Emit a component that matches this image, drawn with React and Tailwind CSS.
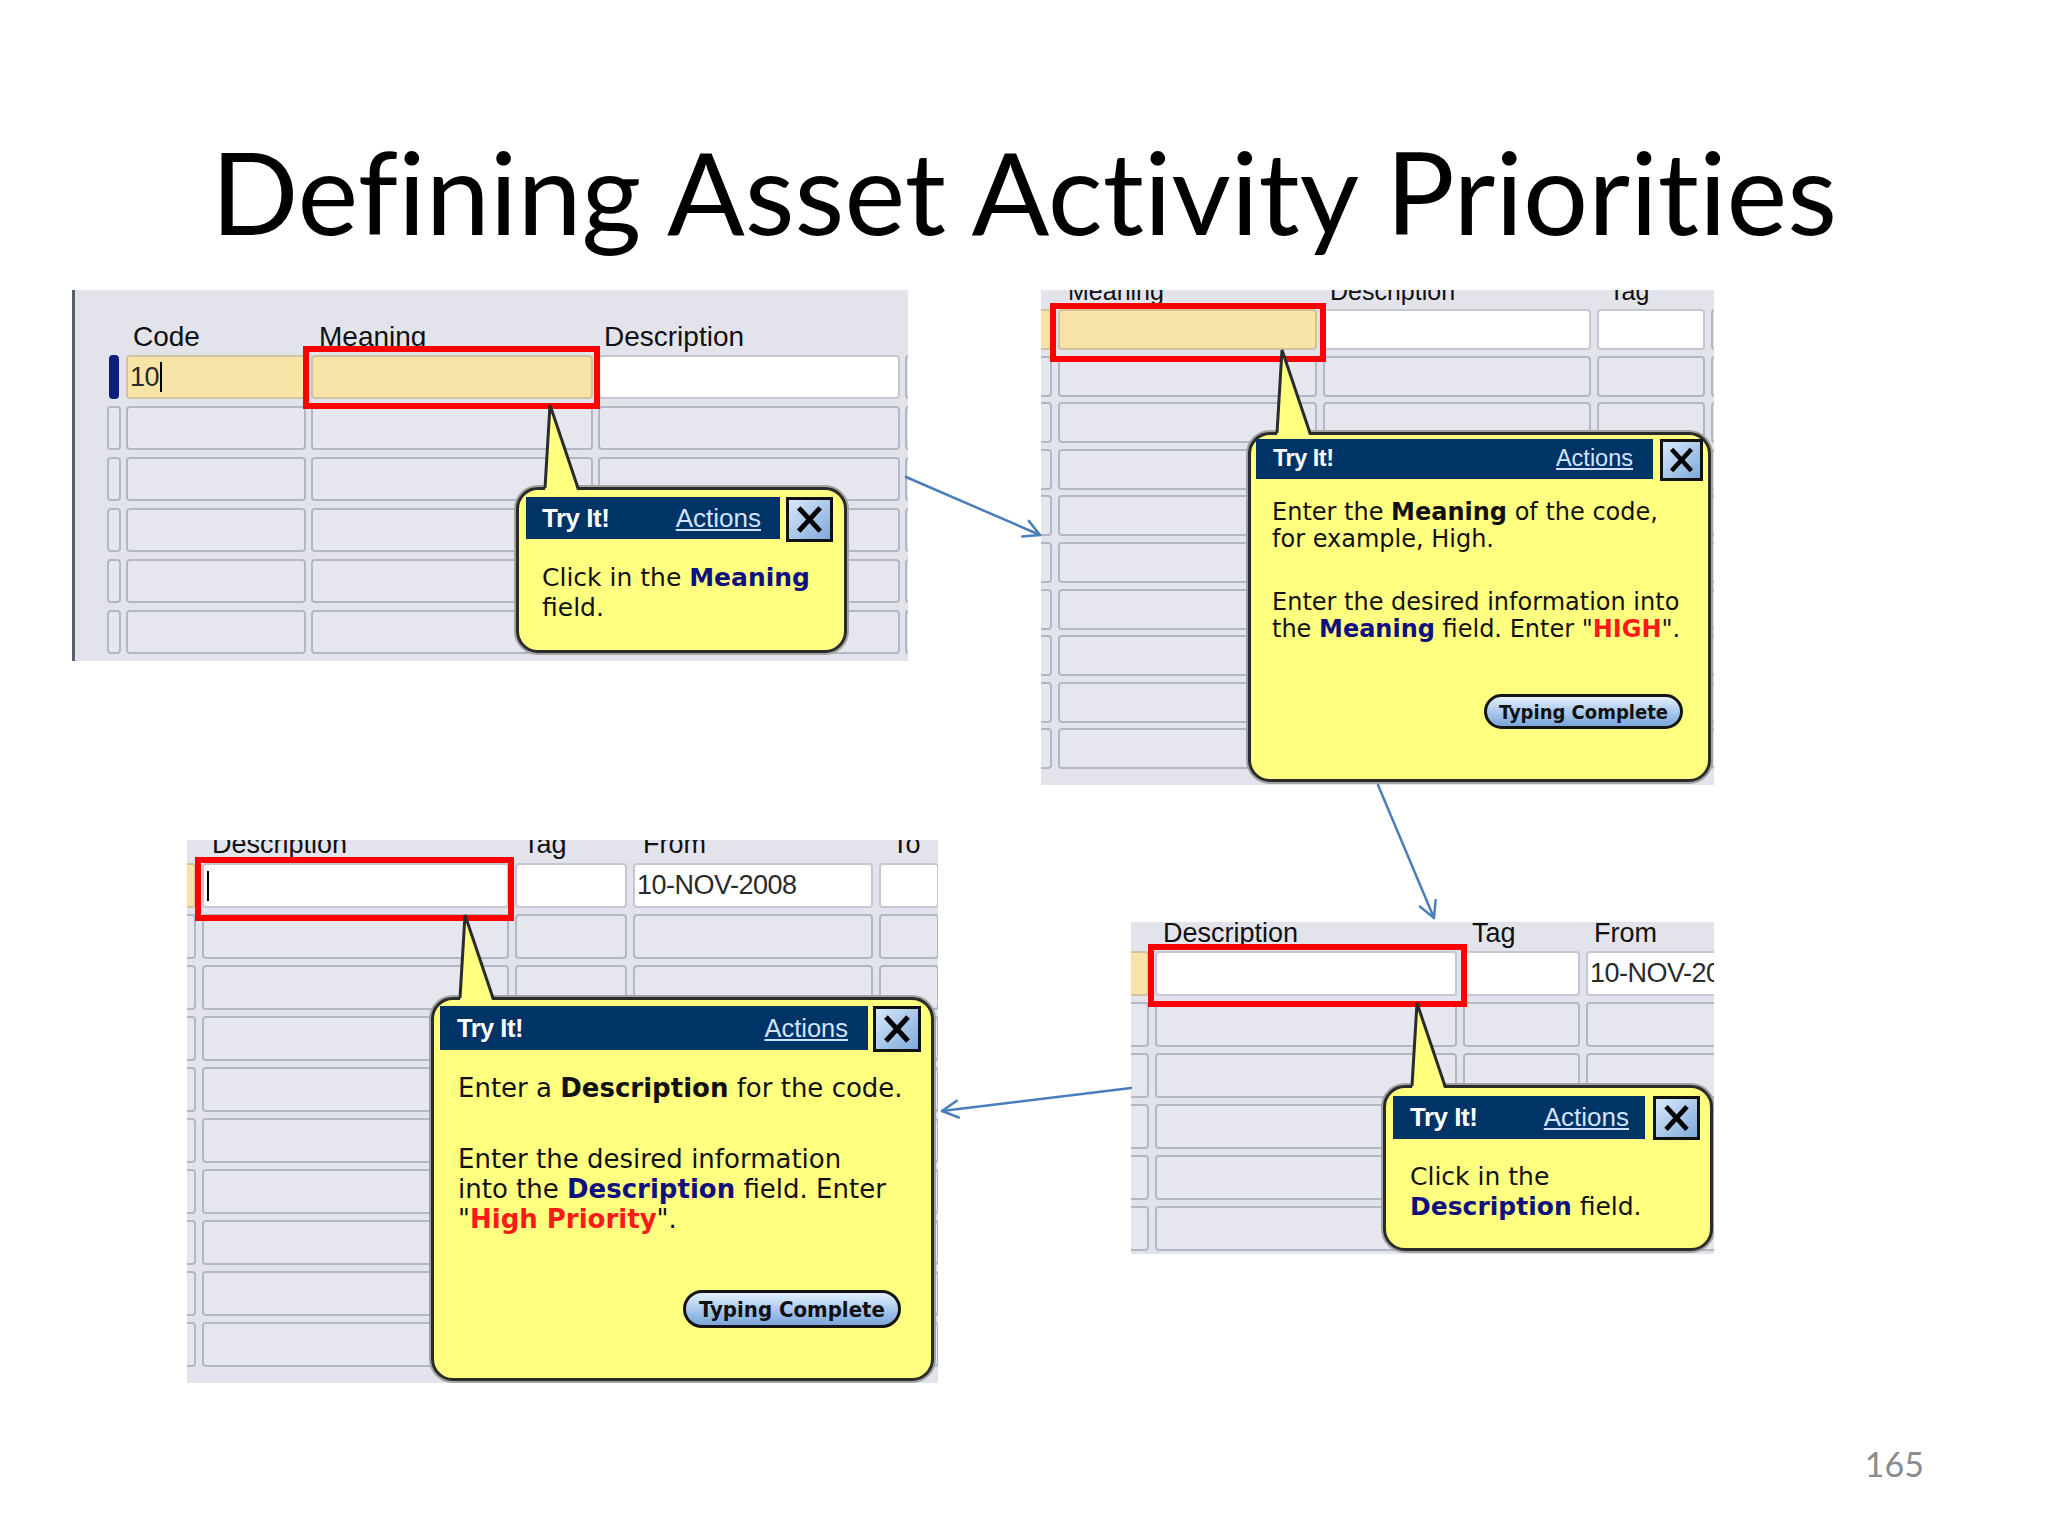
import React from 'react'

const UI = "font-['Liberation_Sans',Arial,sans-serif]"
const TIP = "font-['DejaVu_Sans',Verdana,sans-serif]"
const BTN = "font-['DejaVu_Sans_Condensed','DejaVu_Sans',sans-serif]"

const KIND = {
  cell: 'border-[#b2b7c4] bg-[#e6e7ee]',
  yellow: 'border-[#cfc3a0] bg-[#f9e4a8]',
  white: 'border-[#c4c8d2] bg-white',
}

function Cell({ w, kind, text, cursor }) {
  if (kind === 'navy') {
    return (
      <div className={`${w} shrink-0 h-full`}>
        <div className="ml-[2px] w-[10px] h-full rounded-[4px] bg-[#0c1f7e]" />
      </div>
    )
  }
  return (
    <div className={`${w} ${KIND[kind]} shrink-0 h-full rounded-[4px] border-2 flex items-center overflow-hidden whitespace-nowrap pl-[2px] text-[27px] text-[#2a2a2a]`}>
      {text && <span className="tracking-[-0.5px]">{text}</span>}
      {cursor && <span className="ml-[1px] w-[2px] h-[30px] bg-black" />}
    </div>
  )
}

function Panel({ pos, cols, gap, shift, head, headers, rows, rowH, rowGap, first, red, children }) {
  return (
    <div className={`absolute overflow-hidden bg-[#e3e4eb] ${UI} ${pos}`}>
      <div className={`flex ${gap} ${shift} ${head} text-[#111] whitespace-nowrap`}>
        {cols.map((w, i) => (
          <div key={i} className={`shrink-0 ${w} ${headers[i] ? headers[i].c : ''}`}>
            {headers[i] ? headers[i].t : ''}
          </div>
        ))}
      </div>
      <div className={`flex flex-col ${rowGap} ${shift}`}>
        {Array.from({ length: rows }).map((_, r) => (
          <div key={r} className={`flex ${gap} ${rowH}`}>
            {cols.map((w, i) => {
              const f = r === 0 ? first[i] : { k: 'cell' }
              return <Cell key={i} w={w} kind={f.k} text={f.t} cursor={f.cur} />
            })}
          </div>
        ))}
      </div>
      {/* highlight frame */}
      <div className={`absolute border-[6px] border-[#ff0000] ${red}`} />
      {children}
    </div>
  )
}

function XBox({ cls }) {
  return (
    <div className={`shrink-0 border-[3px] border-[#111] bg-linear-to-br from-[#d9e9fb] to-[#7fa9da] ${cls}`}>
      <svg viewBox="0 0 40 40" className="w-full h-full">
        <line x1="9" y1="8" x2="31" y2="32" stroke="#000" strokeWidth="5" />
        <line x1="31" y1="8" x2="9" y2="32" stroke="#000" strokeWidth="5" />
      </svg>
    </div>
  )
}

function TypingComplete({ cls }) {
  return (
    <div className={`ml-auto flex items-center justify-center rounded-full border-[3px] border-[#141414] bg-linear-to-b from-[#e4effb] via-[#abcaee] to-[#7ba6d8] font-bold text-[#111] ${BTN} ${cls}`}>
      Typing Complete
    </div>
  )
}

function Bubble({ pos, pad, gap, bar, xbox, head, children }) {
  return (
    <div className={`absolute rounded-[22px] border-[3px] border-[#2b2b2b] bg-[#ffff80] shadow-[0_0_0_2px_#a2a2a2] ${pos}`}>
      <svg className="absolute left-0 top-[-93px] w-[80px] h-[96px] overflow-visible" viewBox="0 0 80 96">
        <polygon points="26,96 31,8 59,96" fill="#ffff80" />
        <polyline points="26,91 31,8 59,91" fill="none" stroke="#2b2b2b" strokeWidth="3" />
      </svg>
      <div className={`flex items-start ${pad} ${gap}`}>
        <div className={`flex items-center justify-between bg-[#003366] ${UI} ${bar} ${head}`}>
          <span className="font-bold text-white tracking-[-0.5px]">Try It!</span>
          <span className="text-[#d2e3ff] underline underline-offset-2">Actions</span>
        </div>
        <XBox cls={xbox} />
      </div>
      {children}
    </div>
  )
}

const Navy = ({ children }) => <b className="text-[#10107e]">{children}</b>
const Red = ({ children }) => <b className="text-[#ff1a1a]">{children}</b>

export default function App() {
  return (
    <div className="relative w-[2048px] h-[1536px] overflow-hidden bg-white">
      <h1 className="pt-[133px] text-center text-[115px] leading-none font-['Lato',sans-serif] font-normal text-black [font-variant-ligatures:none]">
        Defining Asset Activity Priorities
      </h1>

      {/* step 1 */}
      <Panel
        pos="left-[72px] top-[290px] w-[836px] h-[371px] border-l-[3px] border-[#566070]"
        cols={['w-[14px]', 'w-[180px]', 'w-[282px]', 'w-[302px]', 'w-[60px]']}
        gap="gap-[5px]"
        shift="pl-[32px]"
        head="h-[65px] pt-[31px] text-[28px] leading-[32px]"
        headers={[null, { t: 'Code', c: 'pl-[7px]' }, { t: 'Meaning', c: 'pl-[8px]' }, { t: 'Description', c: 'pl-[6px]' }, null]}
        rows={6}
        rowH="h-[44px]"
        rowGap="gap-[7px]"
        first={[{ k: 'navy' }, { k: 'yellow', t: '10', cur: true }, { k: 'yellow' }, { k: 'white' }, { k: 'cell' }]}
        red="left-[228px] top-[56px] w-[297px] h-[63px]"
      >
        <Bubble
          pos="left-[441px] top-[197px] w-[331px] h-[166px]"
          pad="pl-[7px] pt-[7px]"
          gap="gap-[6px]"
          bar="w-[254px] h-[42px]"
          xbox="w-[47px] h-[45px]"
          head="pl-[16px] pr-[19px] text-[26px]"
        >
          <p className={`${TIP} mt-[21px] pl-[23px] text-[25px] leading-[30px] text-[#111]`}>
            Click in the <Navy>Meaning</Navy>
            <br />
            field.
          </p>
        </Bubble>
      </Panel>

      {/* step 2 */}
      <Panel
        pos="left-[1041px] top-[290px] w-[673px] h-[495px]"
        cols={['w-[41px]', 'w-[259px]', 'w-[268px]', 'w-[108px]', 'w-[60px]']}
        gap="gap-[6px]"
        shift="-ml-[30px]"
        head="-mt-[13px] h-[32px] text-[25px] leading-[29px]"
        headers={[null, { t: 'Meaning', c: 'pl-[10px]' }, { t: 'Description', c: 'pl-[7px]' }, { t: 'Tag', c: 'pl-[12px]' }, null]}
        rows={10}
        rowH="h-[41px]"
        rowGap="gap-[5.6px]"
        first={[{ k: 'yellow' }, { k: 'yellow' }, { k: 'white' }, { k: 'white' }, { k: 'cell' }]}
        red="left-[9px] top-[13px] w-[276px] h-[59px]"
      >
        <Bubble
          pos="left-[207px] top-[142px] w-[463px] h-[350px]"
          pad="pl-[5px] pt-[4px]"
          gap="gap-[7px]"
          bar="w-[397px] h-[40px]"
          xbox="w-[43px] h-[42px]"
          head="pl-[17px] pr-[20px] text-[23.5px]"
        >
          <div className={`${TIP} mt-[18px] pl-[21px] text-[24px] leading-[27px] text-[#111] whitespace-nowrap`}>
            <p>
              Enter the <b>Meaning</b> of the code,
              <br />
              for example, High.
            </p>
            <p className="mt-[36px]">
              Enter the desired information into
              <br />
              the <Navy>Meaning</Navy> field. Enter "<Red>HIGH</Red>".
            </p>
          </div>
          <div className="flex pr-[25px] mt-[51px]">
            <TypingComplete cls="w-[199px] h-[35px] text-[20px]" />
          </div>
        </Bubble>
      </Panel>

      {/* step 3 */}
      <Panel
        pos="left-[187px] top-[840px] w-[751px] h-[543px]"
        cols={['w-[40px]', 'w-[307px]', 'w-[112px]', 'w-[240px]', 'w-[60px]']}
        gap="gap-[6px]"
        shift="-ml-[31px]"
        head="-mt-[11px] h-[34px] text-[27px] leading-[31px]"
        headers={[null, { t: 'Description', c: 'pl-[10px]' }, { t: 'Tag', c: 'pl-[8px]' }, { t: 'From', c: 'pl-[10px]' }, { t: 'To', c: 'pl-[13px]' }]}
        rows={10}
        rowH="h-[45px]"
        rowGap="gap-[6px]"
        first={[{ k: 'yellow' }, { k: 'white', cur: true }, { k: 'white' }, { k: 'white', t: '10-NOV-2008' }, { k: 'white' }]}
        red="left-[8px] top-[17px] w-[319px] h-[64px]"
      >
        <Bubble
          pos="left-[244px] top-[157px] w-[503px] h-[384px]"
          pad="pl-[6px] pt-[6px]"
          gap="gap-[5px]"
          bar="w-[428px] h-[44px]"
          xbox="w-[48px] h-[46px]"
          head="pl-[17px] pr-[20px] text-[25.5px]"
        >
          <div className={`${TIP} mt-[21px] pl-[24px] text-[26px] leading-[30px] text-[#111] whitespace-nowrap`}>
            <p>
              Enter a <b>Description</b> for the code.
            </p>
            <p className="mt-[41px]">
              Enter the desired information
              <br />
              into the <Navy>Description</Navy> field. Enter
              <br />
              "<Red>High Priority</Red>".
            </p>
          </div>
          <div className="flex pr-[30px] mt-[56px]">
            <TypingComplete cls="w-[218px] h-[38px] text-[22px]" />
          </div>
        </Bubble>
      </Panel>

      {/* step 4 */}
      <Panel
        pos="left-[1131px] top-[922px] w-[583px] h-[332px]"
        cols={['w-[41px]', 'w-[302px]', 'w-[117px]', 'w-[200px]']}
        gap="gap-[6px]"
        shift="-ml-[23px]"
        head="-mt-[4px] h-[33px] text-[27px] leading-[31px]"
        headers={[null, { t: 'Description', c: 'pl-[8px]' }, { t: 'Tag', c: 'pl-[9px]' }, { t: 'From', c: 'pl-[8px]' }]}
        rows={6}
        rowH="h-[45px]"
        rowGap="gap-[6px]"
        first={[{ k: 'yellow' }, { k: 'white' }, { k: 'white' }, { k: 'white', t: '10-NOV-2008' }]}
        red="left-[17px] top-[22px] w-[319px] h-[63px]"
      >
        <Bubble
          pos="left-[252px] top-[163px] w-[330px] h-[166px]"
          pad="pl-[7px] pt-[8px]"
          gap="gap-[8px]"
          bar="w-[252px] h-[43px]"
          xbox="w-[47px] h-[44px]"
          head="pl-[17px] pr-[16px] text-[26px]"
        >
          <p className={`${TIP} mt-[22px] pl-[24px] text-[25px] leading-[30px] text-[#111]`}>
            Click in the
            <br />
            <Navy>Description</Navy> field.
          </p>
        </Bubble>
      </Panel>

      {/* connecting arrows */}
      <svg className="absolute inset-0 w-full h-full pointer-events-none" viewBox="0 0 2048 1536">
        <g fill="none" stroke="#4a7ebb" strokeWidth="2.5" strokeLinecap="round" strokeLinejoin="round">
          <line x1="906" y1="477" x2="1040" y2="535" />
          <polyline points="1028.8,520.9 1040,535 1022.1,536.4" />
          <line x1="1378" y1="785" x2="1434" y2="918" />
          <polyline points="1435.6,900.1 1434,918 1420,906.6" />
          <line x1="1131" y1="1088" x2="942" y2="1111" />
          <polyline points="958.8,1117.5 942,1111 956.8,1100.7" />
        </g>
      </svg>

      <div className="absolute right-[124px] top-[1444px] text-[34px] leading-[40px] font-['Lato',sans-serif] text-[#8b8b8b]">
        165
      </div>
    </div>
  )
}
